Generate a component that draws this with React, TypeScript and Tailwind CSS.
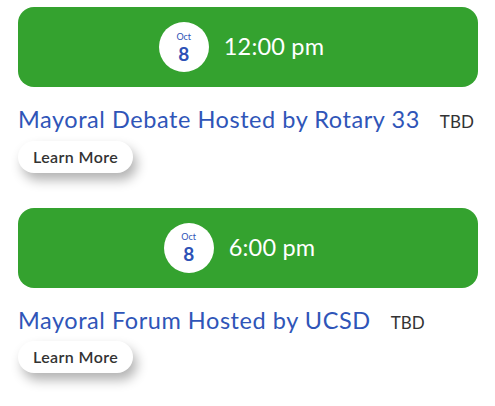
import React from "react";

const events = [
  { time: "12:00 pm", title: "Mayoral Debate Hosted by Rotary 33", pad: "pr-[13px]" },
  { time: "6:00 pm", title: "Mayoral Forum Hosted by UCSD", pad: "pr-[17px]" },
];

export default function App() {
  return (
    <div
      className="w-[495px] h-[406px] bg-white overflow-hidden px-[18px] pt-[7px] flex flex-col gap-[35px]"
      style={{ fontFamily: "Lato, 'Open Sans', sans-serif" }}
    >
      {events.map((e, i) => (
        <div key={i} className="flex flex-col">
          <div className={`h-[80px] w-[460px] rounded-[16px] bg-[#34a22f] flex items-center justify-center gap-[15px] ${e.pad}`}>
            <div className="w-[50px] h-[50px] rounded-full bg-white flex flex-col items-center justify-center gap-[2px] text-[#2d52b6]">
              <span className="text-[9px] leading-[10px]">Oct</span>
              <span className="text-[19px] font-bold leading-[19px]">8</span>
            </div>
            <span className="text-white text-[23.5px] leading-none tracking-[0.2px]">{e.time}</span>
          </div>
          <div className="flex items-baseline mt-[17px]">
            <span className="text-[#2f55b8] text-[23.5px] leading-[30px] tracking-[0.55px]">{e.title}</span>
            <span className="text-[#333] text-[17px] ml-[20px]">TBD</span>
          </div>
          <div className="mt-[6px]">
            <button className="h-[32px] px-[15px] rounded-full bg-white text-[#333] text-[16px] font-semibold tracking-[0.4px] shadow-[4px_7px_12px_rgba(0,0,0,0.3)]">
              Learn More
            </button>
          </div>
        </div>
      ))}
    </div>
  );
}
